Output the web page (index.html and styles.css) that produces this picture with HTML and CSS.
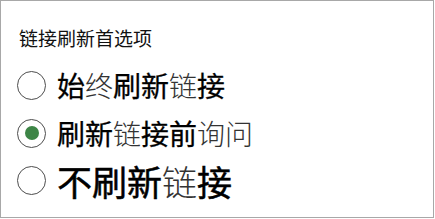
FILE: index.html
```html
<!DOCTYPE html>
<html lang="zh-CN">
  <head>
    <meta charset="UTF-8" />
    <meta name="viewport" content="width=device-width, initial-scale=1.0" />
    <title>链接刷新首选项</title>
    <link rel="stylesheet" href="styles.css">
  </head>
  <body>
    <main class="panel">
      <header class="titulo">链接刷新首选项</header>
      <!-- Cada opción: el círculo y el texto en una fila -->
      <div class="opcion">
        <span class="radio"></span>
        <span class="texto"><b>始</b><i>终</i><b>刷新</b><i>链</i><b>接</b></span>
      </div>
      <div class="opcion">
        <span class="radio marcado"></span>
        <span class="texto"><b>刷新</b><i>链</i><b>接前</b><i>询问</i></span>
      </div>
      <div class="opcion grande">
        <span class="radio"></span>
        <span class="texto"><b>不刷新</b><i>链</i><b>接</b></span>
      </div>
    </main>
  </body>
</html>
```

FILE: styles.css
```css
body {
  margin: 0;
  background: white;
}
.panel {
  font-family: "Noto Sans CJK SC", "Noto Sans", sans-serif;
  box-sizing: border-box;
  width: 434px;
  height: 218px;
  border: 1px solid #a8a8a8;
  padding: 23px 0 0 16px;
  display: flex;
  flex-direction: column;
}
.titulo {
  font-size: 19px;
  line-height: 28px;
  color: #111;
  margin-left: 2px;
  margin-bottom: 9px;
}
.opcion {
  display: flex;
  align-items: center;
  gap: 11px;
  height: 48px;
}
.opcion.grande {
  height: 46px;
}
/* el círculo del radio */
.radio {
  box-sizing: border-box;
  width: 29px;
  height: 29px;
  border: 1.6px solid #4d4d4d;
  border-radius: 50%;
  display: flex;
  justify-content: center;
  align-items: center;
}
.radio.marcado::after {
  content: "";
  width: 14px;
  height: 14px;
  border-radius: 50%;
  background: #3d8546;
}
.texto {
  font-size: 28px;
  line-height: 1;
  white-space: nowrap;
}
.grande .texto {
  font-size: 35px;
}
/* no hay peso medio instalado: engordamos un poco el regular */
.texto b {
  font-weight: 400;
  color: #000;
  -webkit-text-stroke: 0.3px #000;
}
.grande .texto b {
  -webkit-text-stroke: 0.5px #000;
}
.texto i {
  font-style: normal;
  font-weight: 300;
  color: #333;
}
```
